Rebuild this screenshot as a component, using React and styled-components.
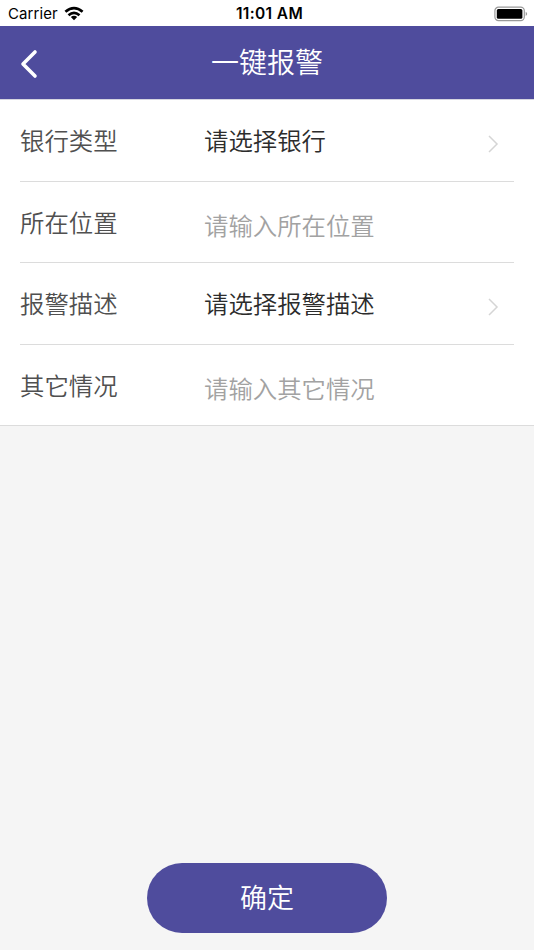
import React from "react";
import styled, { createGlobalStyle } from "styled-components";

const Global = createGlobalStyle`
  * { box-sizing: border-box; }
  body { margin: 0; background: #f5f5f5; font-family: "Noto Sans CJK SC", sans-serif; font-weight: 350; }
`;
const Screen = styled.div`
  height: 950px; display: flex; flex-direction: column; background: #f5f5f5; overflow: hidden;
`;
const StatusBar = styled.div`
  height: 26px; flex: none; display: grid; grid-template-columns: 1fr auto 1fr; align-items: center;
  padding: 2px 6px 0 8px; background: #fff; color: #000;
  font: 400 15px/24px Inter, sans-serif;
`;
const Carrier = styled.div`display: flex; align-items: center; gap: 6px; letter-spacing: 0.08px;`;
const Clock = styled.div`font-size: 15.5px; font-weight: 600; letter-spacing: 0.35px; padding-left: 3px;`;
const Battery = styled.div`display: flex; justify-content: flex-end; padding-bottom: 1px;`;
const Icon = styled.svg`display: block; flex: none;`;
const NavBar = styled.header`
  height: 74px; flex: none; display: grid; grid-template-columns: 60px 1fr 60px; align-items: center;
  background: #4f4c9d; color: #fff; border-bottom: 1px solid #d5d5df;
`;
const Back = styled.button`
  border: 0; background: none; padding: 2px 0 0 19.5px; display: flex; color: inherit;
`;
const Title = styled.h1`
  margin: 0; padding-bottom: 3px; font-size: 28px; line-height: 40px; font-weight: 350; text-align: center;
`;
const Form = styled.div`background: #fff; border-bottom: 1px solid #dcdcdc; padding: 0 20px; flex: none;`;
const Row = styled.div`
  height: 81.6px; display: grid; grid-template-columns: 184px 1fr 26px; align-items: center;
  border-bottom: 1px solid #dcdcdc; font-size: 24.4px; line-height: 36px;
  &:last-child { border-bottom: 0; height: 80.2px; }
`;
const Label = styled.div`color: #505050;`;
const Value = styled.div`
  color: ${p => (p.$hint ? "#a2a2a2" : "#2c2c2c")};
  padding-top: ${p => (p.$hint ? "6px" : "0")};
`;
const Chevron = styled.div`padding-top: 7px;`;
const Submit = styled.button`
  width: 240px; height: 70px; margin: auto auto 17px; padding: 0 0 2px; border: 0; border-radius: 35px;
  background: #4f4c9d; color: #fff; font: 350 27px/40px "Noto Sans CJK SC", sans-serif; flex: none;
`;
const rows = [
  ["银行类型", "请选择银行", false],
  ["所在位置", "请输入所在位置", true],
  ["报警描述", "请选择报警描述", false],
  ["其它情况", "请输入其它情况", true],
];

export default function App() {
  return (
    <Screen>
      <Global />
      <StatusBar>
        <Carrier>
          Carrier
          <Icon width="20" height="16" viewBox="0 0 20 16" fill="none" stroke="#000" strokeWidth="2.7">
            <path d="M1.4 5.8Q10-1.4 18.6 5.8M4.5 9.2Q10 4.4 15.5 9.2" />
            <path d="M6.8 11.1Q10 8.6 13.2 11.1L10 14.2Z" fill="#000" stroke="none" />
          </Icon>
        </Carrier>
        <Clock>11:01 AM</Clock>
        <Battery>
          <Icon width="34" height="16" viewBox="0 0 34 16">
            <rect x="0.9" y="1.2" width="29.4" height="13.4" rx="3.6" fill="none" stroke="#999" strokeWidth="1.2" />
            <rect x="2.8" y="3" width="25.6" height="9.8" rx="1.5" />
            <path d="M31.7 5.7q3 2.2 0 4.4z" fill="#999" />
          </Icon>
        </Battery>
      </StatusBar>
      <NavBar>
        <Back aria-label="返回">
          <Icon width="18" height="30" viewBox="0 0 18 30" fill="none" stroke="currentColor" strokeWidth="3.6" strokeLinecap="round" strokeLinejoin="round">
            <path d="M15 3L3 15L15 27" />
          </Icon>
        </Back>
        <Title>一键报警</Title>
      </NavBar>
      <Form>
        {rows.map(([label, text, hint]) => (
          <Row key={label}>
            <Label>{label}</Label>
            <Value $hint={hint}>{text}</Value>
            {!hint && (
              <Chevron>
                <Icon width="12" height="18" viewBox="0 0 12 18" fill="none" stroke="#d5d5d5" strokeWidth="1.5">
                  <path d="M1 1L9 9L1 17" />
                </Icon>
              </Chevron>
            )}
          </Row>
        ))}
      </Form>
      <Submit>确定</Submit>
    </Screen>
  );
}
